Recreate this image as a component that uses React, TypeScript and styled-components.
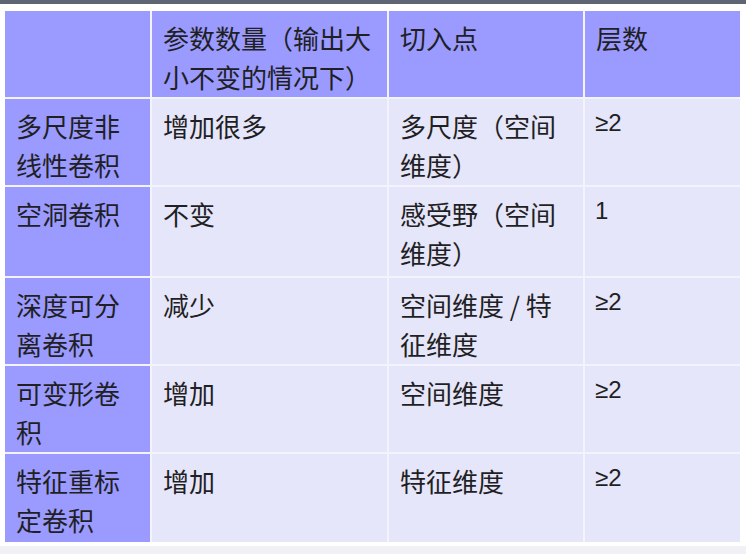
import React from 'react';
import styled, { createGlobalStyle } from 'styled-components';

const GlobalStyle = createGlobalStyle`
  html, body {
    margin: 0;
    padding: 0;
    background: #ffffff;
  }
  body {
    font-family: "Liberation Sans", "Noto Sans CJK SC", sans-serif;
    color: #1f1f24;
  }
`;

const Page = styled.div`
  width: 746px;
  height: 554px;
  display: flex;
  flex-direction: column;
  overflow: hidden;
`;

const TopBar = styled.div`
  height: 4px;
  background: #5e6674;
`;

const Content = styled.div`
  padding: 7px 6px 4px 5px;
`;

const Footer = styled.div`
  flex: 1;
  background: #f0f1f5;
`;

const Table = styled.div`
  display: grid;
  grid-template-columns: 145px 235px 194px 155px;
  grid-template-rows: 86px 86px 89px 86px 86px 88px;
  gap: 2px;
  background: #f3f3fd;
`;

const Cell = styled.div<{ $head?: boolean }>`
  background: ${(p) => (p.$head ? '#9a9aff' : '#e6e6fa')};
  padding: 7px 11px 0 11px;
  font-size: 26px;
  line-height: 39px;
  font-family: "Noto Sans CJK SC", sans-serif;
  overflow: hidden;
`;

const NumCell = styled(Cell)`
  font-family: "Liberation Sans", "Noto Sans CJK SC", sans-serif;
  font-size: 24px;
  padding-top: 4px;
  padding-left: 10px;
`;

type Row = {
  name: string;
  params: string;
  entry: string;
  layers: string;
};

const rows: Row[] = [
  { name: '多尺度非线性卷积', params: '增加很多', entry: '多尺度（空间维度）', layers: '≥2' },
  { name: '空洞卷积', params: '不变', entry: '感受野（空间维度）', layers: '1' },
  { name: '深度可分离卷积', params: '减少', entry: '空间维度 / 特征维度', layers: '≥2' },
  { name: '可变形卷积', params: '增加', entry: '空间维度', layers: '≥2' },
  { name: '特征重标定卷积', params: '增加', entry: '特征维度', layers: '≥2' },
];

export default function App() {
  return (
    <Page>
      <GlobalStyle />
      <TopBar />
      <Content>
        <Table>
          <Cell $head />
          <Cell $head>参数数量（输出大小不变的情况下）</Cell>
          <Cell $head>切入点</Cell>
          <Cell $head>层数</Cell>
          {rows.map((r) => (
            <React.Fragment key={r.name}>
              <Cell $head>{r.name}</Cell>
              <Cell>{r.params}</Cell>
              <Cell>{r.entry}</Cell>
              <NumCell>{r.layers}</NumCell>
            </React.Fragment>
          ))}
        </Table>
      </Content>
      <Footer />
    </Page>
  );
}
